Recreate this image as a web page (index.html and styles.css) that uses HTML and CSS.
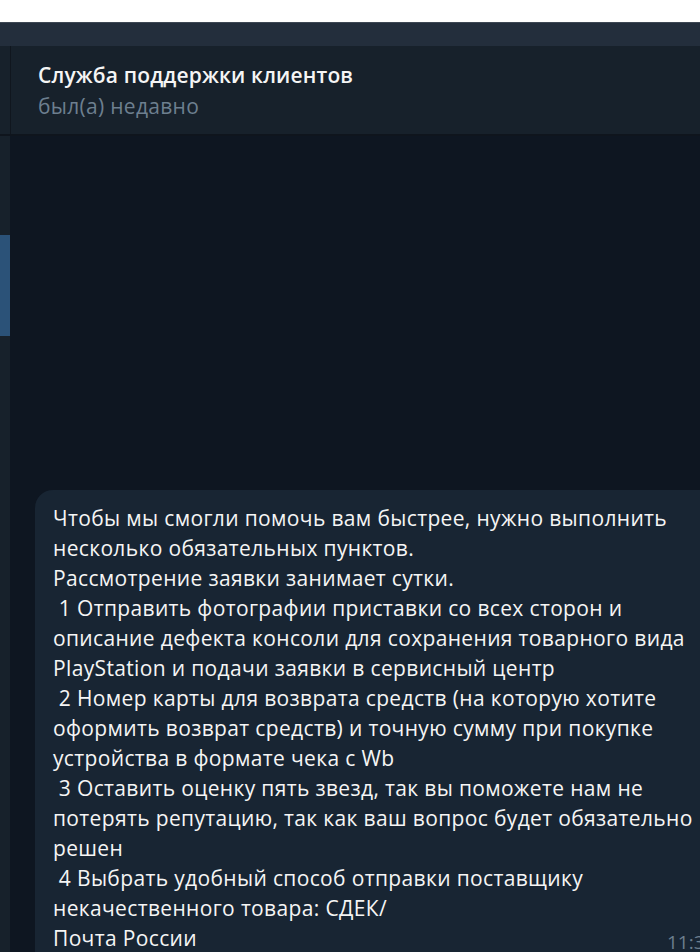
FILE: index.html
```html
<!DOCTYPE html>
<html lang="ru">
<head>
<meta charset="utf-8">
<title>Служба поддержки клиентов</title>
<link rel="stylesheet" href="styles.css">
</head>
<body>
<div class="top-white"></div>
<div class="top-band"></div>
<div class="header">
  <div class="side-strip"></div>
  <div class="divider"></div>
  <div class="header-main">
    <div class="title">Служба поддержки клиентов</div>
    <div class="status">был(а) недавно</div>
  </div>
</div>
<div class="chat">
  <div class="chat-side">
    <div class="side-active"></div>
  </div>
  <div class="divider dark"></div>
  <div class="chat-main">
    <div class="bubble">
      <div class="text">Чтобы мы смогли помочь вам быстрее, нужно выполнить<br>несколько обязательных пунктов.<br>Рассмотрение заявки занимает сутки.<br>&nbsp;1 Отправить фотографии приставки со всех сторон и<br>описание дефекта консоли для сохранения товарного вида<br>PlayStation и подачи заявки в сервисный центр<br>&nbsp;2 Номер карты для возврата средств (на которую хотите<br>оформить возврат средств) и точную сумму при покупке<br>устройства в формате чека с Wb<br>&nbsp;3 Оставить оценку пять звезд, так вы поможете нам не<br>потерять репутацию, так как ваш вопрос будет обязательно<br>решен<br>&nbsp;4 Выбрать удобный способ отправки поставщику<br>некачественного товара: СДЕК/<br>Почта России</div>
      <span class="time">11:32</span>
    </div>
  </div>
</div>
</body>
</html>
```

FILE: styles.css
```css
html, body {
  margin: 0;
  padding: 0;
  width: 700px;
  height: 952px;
  overflow: hidden;
  background: #0e1621;
  font-family: "Open Sans", "Noto Sans", sans-serif;
}

.top-white {
  height: 22px;
  background: #ffffff;
}

.top-band {
  height: 23px;
  background: #232e3c;
  border-top: 1px solid #3e4854;
}

.header {
  display: flex;
  height: 88px;
  background: #17212b;
  border-bottom: 2px solid #0f151d;
}

.side-strip {
  width: 10px;
  background: #17212b;
}

.divider {
  width: 1px;
  background: #10161e;
}

.divider.dark {
  background: #0b1119;
}

.header-main {
  flex: 1;
  padding: 15px 0 0 27px;
}

.title {
  color: #f5f5f5;
  font-size: 21px;
  font-weight: 600;
  line-height: 28px;
  letter-spacing: 0.15px;
}

.status {
  color: #6d7f8f;
  font-size: 21px;
  line-height: 32px;
  margin-top: 1px;
  letter-spacing: 0.3px;
}

.chat {
  display: flex;
  height: 816px;
}

.chat-side {
  width: 10px;
  background: #17212b;
  padding-top: 99px;
}

.side-active {
  width: 10px;
  height: 101px;
  background: #2b5278;
}

.chat-main {
  flex: 1;
  padding: 354px 0 0 25px;
}

.bubble {
  position: relative;
  background: #182533;
  border-radius: 18px 0 0 0;
  width: 700px;
  height: 462px;
  overflow: hidden;
  padding: 13px 0 0 18px;
  box-sizing: border-box;
}

.text {
  color: #f5f5f5;
  font-size: 21px;
  line-height: 30px;
  letter-spacing: 0.35px;
  white-space: nowrap;
}

.time {
  position: absolute;
  left: 632px;
  top: 440px;
  color: #6d7f8f;
  font-size: 19px;
  line-height: 24px;
}
```
